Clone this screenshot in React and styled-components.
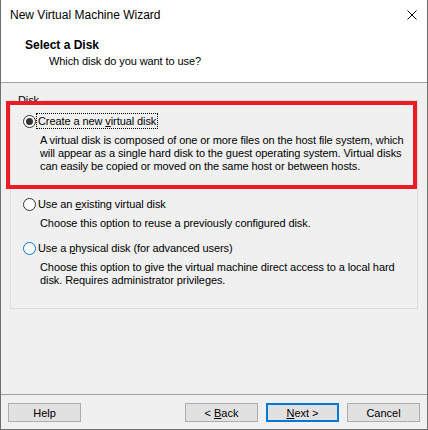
import React from "react";
import styled, { createGlobalStyle } from "styled-components";

const GlobalStyle = createGlobalStyle`
  html, body {
    margin: 0;
    padding: 0;
    background: #ffffff;
  }
  * {
    box-sizing: border-box;
  }
`;

const options = [
  {
    id: "new",
    label: ["Create a new ", "v", "irtual disk"],
    lines: [
      "A virtual disk is composed of one or more files on the host file system, which",
      "will appear as a single hard disk to the guest operating system. Virtual disks",
      "can easily be copied or moved on the same host or between hosts.",
    ],
    checked: true,
    focused: true,
    gap: 23,
  },
  {
    id: "existing",
    label: ["Use an ", "e", "xisting virtual disk"],
    lines: ["Choose this option to reuse a previously configured disk."],
    gap: 10,
  },
  {
    id: "physical",
    label: ["Use a ", "p", "hysical disk (for advanced users)"],
    lines: [
      "Choose this option to give the virtual machine direct access to a local hard",
      "disk. Requires administrator privileges.",
    ],
    hover: true,
    gap: 0,
  },
];

const App = () => {
  return (
    <>
      <GlobalStyle />
      <Window>
        <TitleBar>
          <WindowTitle>New Virtual Machine Wizard</WindowTitle>
          <CloseButton>
            <svg width="10" height="10" viewBox="0 0 10 10">
              <path d="M0.5 0.5 L9.5 9.5 M9.5 0.5 L0.5 9.5" stroke="#000" strokeWidth="1" />
            </svg>
          </CloseButton>
        </TitleBar>
        <Header>
          <HeaderTitle>Select a Disk</HeaderTitle>
          <HeaderSub>Which disk do you want to use?</HeaderSub>
        </Header>
        <Body>
          <GroupBox>
            <Legend>Disk</Legend>
            <GroupContent>
              {options.map((opt) => (
                <Option key={opt.id} $gap={opt.gap}>
                  <RadioRow>
                    <Radio $checked={opt.checked} $hover={opt.hover} />
                    <RadioLabel $focused={opt.focused}>
                      {opt.label[0]}
                      <u>{opt.label[1]}</u>
                      {opt.label[2]}
                    </RadioLabel>
                  </RadioRow>
                  <Description>
                    {opt.lines.map((line) => (
                      <Line key={line}>{line}</Line>
                    ))}
                  </Description>
                </Option>
              ))}
            </GroupContent>
          </GroupBox>
          <Highlight />
        </Body>
        <Footer>
          <Button>Help</Button>
          <Spacer />
          <Button>
            &lt; <u>B</u>ack
          </Button>
          <Button $default>
            <u>N</u>ext &gt;
          </Button>
          <Button>Cancel</Button>
        </Footer>
      </Window>
    </>
  );
};

export default App;

const Window = styled.div`
  width: 428px;
  height: 430px;
  display: flex;
  flex-direction: column;
  border: 1px solid #707070;
  border-top: none;
  background: #f0f0f0;
  font-family: "Liberation Sans", Arial, sans-serif;
  font-size: 11px;
  letter-spacing: -0.09px;
  color: #000;
`;

const TitleBar = styled.div`
  height: 30px;
  display: flex;
  align-items: center;
  justify-content: space-between;
  background: #fff;
  padding: 0 10px 0 9px;
`;

const WindowTitle = styled.div`
  font-size: 12px;
  letter-spacing: 0;
  color: #000;
`;

const CloseButton = styled.div`
  width: 10px;
  height: 10px;
  display: flex;
  svg {
    display: block;
  }
`;

const Header = styled.div`
  height: 53px;
  background: #fff;
  border-bottom: 1px solid #a0a0a0;
  padding: 8px 0 0 24px;
  display: flex;
  flex-direction: column;
`;

const HeaderTitle = styled.div`
  font-weight: bold;
  font-size: 12px;
  letter-spacing: 0;
  line-height: 14px;
`;

const HeaderSub = styled.div`
  line-height: 14px;
  margin-top: 2px;
  padding-left: 24px;
`;

const Body = styled.div`
  position: relative;
  flex: 1;
  padding: 10px 9px 0 9px;
`;

const GroupBox = styled.fieldset`
  margin: 0;
  padding: 0;
  border: 1px solid #dcdcdc;
  min-width: 0;
`;

const Legend = styled.legend`
  margin-left: 5px;
  padding: 0 2px;
  line-height: 14px;
  font-size: 11px;
`;

const GroupContent = styled.div`
  padding: 6px 12px 21px 12px;
`;

const Option = styled.div`
  margin-bottom: ${(p) => p.$gap}px;
`;

const RadioRow = styled.div`
  height: 16px;
  display: flex;
  align-items: center;
`;

const Radio = styled.span`
  position: relative;
  width: 13px;
  height: 13px;
  border-radius: 50%;
  border: 1px solid ${(p) => (p.$hover ? "#0078d7" : "#333333")};
  background: #ffffff;
  flex: none;
  margin-right: 1px;
  &::after {
    content: "";
    display: ${(p) => (p.$checked ? "block" : "none")};
    position: absolute;
    left: 2px;
    top: 2px;
    width: 7px;
    height: 7px;
    border-radius: 50%;
    background: #333333;
  }
`;

const RadioLabel = styled.span`
  padding: 0 1px;
  line-height: 14px;
  outline: ${(p) => (p.$focused ? "1px dotted #000" : "none")};
  outline-offset: 0;
`;

const Description = styled.div`
  margin-top: 5px;
  padding-left: 17px;
`;

const Line = styled.div`
  line-height: 13px;
  white-space: nowrap;
`;

const Highlight = styled.div`
  position: absolute;
  left: 5px;
  top: 18px;
  width: 411px;
  height: 88px;
  border: 4px solid #ed1c24;
  pointer-events: none;
`;

const Footer = styled.div`
  height: 35px;
  border-top: 1px solid #a0a0a0;
  display: flex;
  align-items: flex-start;
  gap: 8px;
  padding: 8px 7px 0 7px;
`;

const Spacer = styled.div`
  flex: 1;
`;

const Button = styled.button`
  width: 73px;
  height: 19px;
  padding: 0;
  background: #e1e1e1;
  border: ${(p) => (p.$default ? "2px solid #0078d7" : "1px solid #adadad")};
  font-family: inherit;
  font-size: 11px;
  letter-spacing: 0;
  color: #000;
  display: flex;
  align-items: center;
  justify-content: center;
  white-space: pre;
`;
